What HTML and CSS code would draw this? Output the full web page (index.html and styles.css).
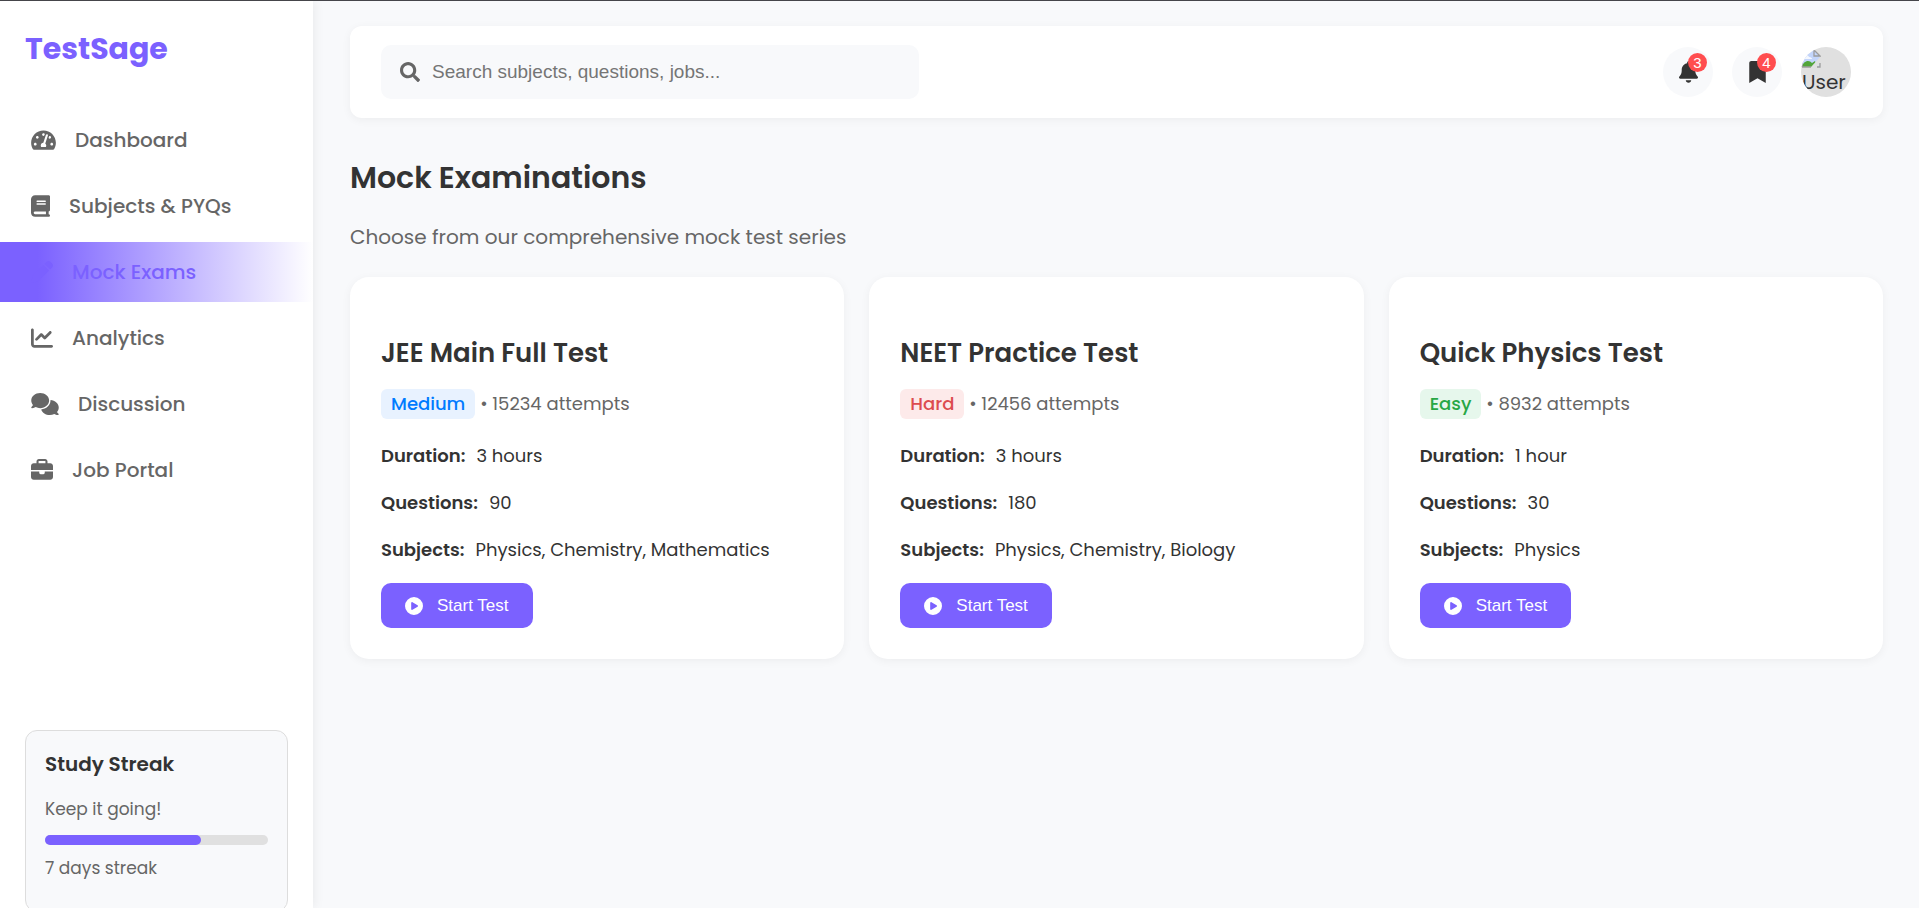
FILE: index.html
```html
<!DOCTYPE html>
<html lang="en">
<head>
<meta charset="utf-8">
<title>TestSage</title>
<link rel="stylesheet" href="styles.css">
</head>
<body>
<svg class="sprite" aria-hidden="true">
  <symbol id="play" viewBox="0 0 512 512"><path fill-rule="evenodd" d="M256 0a256 256 0 1 0 0 512 256 256 0 1 0 0-512zM188 147c8-5 17-5 25-1l144 88c7 5 12 13 12 22s-5 17-12 22l-144 88c-8 4-17 4-25 0s-12-12-12-21V168c0-9 5-17 12-21z"/></symbol>
</svg>
<div class="page">
  <aside class="sidebar">
    <div class="logo">TestSage</div>
    <nav class="nav">
      <a class="nav-link" href="#"><svg class="icon icon-wide" viewBox="0 0 576 512"><path d="M288 32C128.94 32 0 160.94 0 320c0 52.8 14.25 102.26 39.06 144.8 5.61 9.62 16.3 15.2 27.44 15.2h443c11.14 0 21.83-5.58 27.44-15.2C561.75 422.26 576 372.8 576 320c0-159.06-128.94-288-288-288zm0 64c14.71 0 26.58 10.13 30.32 23.65-1.11 2.26-2.64 4.23-3.45 6.67l-9.22 27.67c-5.13 3.49-10.97 6.01-17.64 6.01-17.67 0-32-14.33-32-32S270.33 96 288 96zM96 384c-17.67 0-32-14.33-32-32s14.33-32 32-32 32 14.33 32 32-14.33 32-32 32zm48-160c-17.67 0-32-14.33-32-32s14.33-32 32-32 32 14.33 32 32-14.33 32-32 32zm246.77-72.41l-61.33 184C343.13 347.33 352 364.54 352 384c0 11.72-3.38 22.55-8.88 32H232.88c-5.5-9.45-8.88-20.28-8.88-32 0-33.94 26.5-61.43 59.9-63.59l61.34-184.01c4.17-12.56 17.73-19.45 30.36-15.17 12.57 4.19 19.35 17.79 15.17 30.36zm14.66 57.2l15.52-46.55c3.47-1.29 7.13-2.23 11.05-2.23 17.67 0 32 14.33 32 32s-14.33 32-32 32c-11.38-.01-20.89-6.28-26.57-15.22zM480 384c-17.67 0-32-14.33-32-32s14.33-32 32-32 32 14.33 32 32-14.33 32-32 32z"/></svg>Dashboard</a>
      <a class="nav-link" href="#"><svg class="icon icon-narrow" viewBox="0 0 448 512"><path d="M96 0C43 0 0 43 0 96V416c0 53 43 96 96 96H384h32c17.7 0 32-14.3 32-32s-14.3-32-32-32V384c17.7 0 32-14.3 32-32V32c0-17.7-14.3-32-32-32H384 96zm0 384H352v64H96c-17.7 0-32-14.3-32-32s14.3-32 32-32zm32-240c0-8.8 7.2-16 16-16H336c8.8 0 16 7.2 16 16s-7.2 16-16 16H144c-8.8 0-16-7.2-16-16zm16 48H336c8.8 0 16 7.2 16 16s-7.2 16-16 16H144c-8.8 0-16-7.2-16-16s7.2-16 16-16z"/></svg>Subjects &amp; PYQs</a>
      <a class="nav-link active" href="#" aria-current="page"><svg class="icon" viewBox="0 0 512 512"><path d="M362.7 19.3L314.3 67.7 444.3 197.7l48.4-48.4c25-25 25-65.5 0-90.5L453.3 19.3c-25-25-65.5-25-90.5 0zM291.7 90.3L58.6 323.5c-10.4 10.4-18 23.3-22.2 37.4L1 481.2c-2.5 8.5-.2 17.6 6 23.8s15.300 8.500 23.700 6.100L151 475.700c14.100-4.200 27-11.800 37.400-22.200L421.700 220.300z"/></svg>Mock Exams</a>
      <a class="nav-link" href="#"><svg class="icon" viewBox="0 0 512 512"><path d="M64 64c0-17.7-14.3-32-32-32S0 46.3 0 64V400c0 44.2 35.8 80 80 80H480c17.7 0 32-14.3 32-32s-14.3-32-32-32H80c-8.8 0-16-7.2-16-16V64zm406.6 86.6c12.5-12.5 12.5-32.8 0-45.3s-32.8-12.500-45.300 0L320 210.700l-57.400-57.400c-12.500-12.500-32.800-12.500-45.300 0l-112 112c-12.500 12.500-12.500 32.800 0 45.300s32.800 12.500 45.300 0L240 221.300l57.400 57.400c12.500 12.500 32.800 12.500 45.300 0l128-128z"/></svg>Analytics</a>
      <a class="nav-link" href="#"><svg class="icon icon-widest" viewBox="0 0 640 512"><path d="M208 352c114.900 0 208-78.800 208-176S322.900 0 208 0S0 78.800 0 176c0 38.600 14.700 74.300 39.600 103.400c-3.500 9.400-8.700 17.700-14.200 24.700c-4.800 6.200-9.700 11-13.300 14.300c-1.800 1.600-3.300 2.900-4.300 3.700l-1.300 1C1 327.200-1.400 334.400 .8 340.900S9.100 352 16 352c21.800 0 43.800-5.600 62.100-12.500c9.200-3.500 17.800-7.400 25.200-11.400C134.100 343.300 169.800 352 208 352zM448 176c0 112.300-99.100 196.900-216.500 207C255.800 457.400 336.400 512 432 512c38.200 0 73.900-8.700 104.700-23.900c7.500 4 16 7.900 25.200 11.400c18.300 6.900 40.300 12.500 62.100 12.500c6.900 0 13.100-4.500 15.200-11.100c2.100-6.600-.2-13.800-5.800-17.900l-1.300-1c-1-.8-2.500-2-4.300-3.700c-3.600-3.300-8.500-8.100-13.300-14.300c-5.500-7-10.700-15.400-14.200-24.700c24.900-29 39.600-64.700 39.600-103.400c0-92.800-84.900-168.900-192.600-175.500c.4 5.100 .6 10.300 .6 15.500z"/></svg>Discussion</a>
      <a class="nav-link" href="#"><svg class="icon" viewBox="0 0 512 512"><path d="M184 48H328c4.400 0 8 3.600 8 8V96H176V56c0-4.400 3.600-8 8-8zm-56 8V96H64C28.700 96 0 124.700 0 160v96H192 320 512V160c0-35.300-28.700-64-64-64H384V56c0-30.900-25.100-56-56-56H184c-30.900 0-56 25.100-56 56zM512 288H320v32c0 17.700-14.300 32-32 32H224c-17.700 0-32-14.300-32-32V288H0V416c0 35.300 28.700 64 64 64H448c35.300 0 64-28.700 64-64V288z"/></svg>Job Portal</a>
    </nav>
    <section class="streak">
      <h3 class="streak-title">Study Streak</h3>
      <p class="streak-text">Keep it going!</p>
      <div class="bar"><div class="bar-fill" style="width: 70%"></div></div>
      <p class="streak-text">7 days streak</p>
    </section>
  </aside>
  <main class="main">
    <header class="header">
      <label class="search">
        <svg class="search-icon" viewBox="0 0 512 512"><path d="M505 442.700L405.300 343c-4.500-4.500-10.600-7-17-7H372c27.600-35.300 44-79.700 44-128C416 93.100 322.900 0 208 0S0 93.100 0 208s93.100 208 208 208c48.300 0 92.700-16.400 128-44v16.300c0 6.400 2.500 12.500 7 17l99.700 99.700c9.400 9.400 24.600 9.400 33.900 0l28.300-28.300c9.400-9.400 9.400-24.600.1-34zM208 336c-70.700 0-128-57.200-128-128 0-70.700 57.200-128 128-128 70.700 0 128 57.200 128 128 0 70.700-57.200 128-128 128z"/></svg>
        <input class="search-input" type="text" aria-label="Search" placeholder="Search subjects, questions, jobs...">
      </label>
      <div class="actions">
        <button class="round" type="button" aria-label="Notifications"><svg class="icon icon-narrow" viewBox="0 0 448 512"><path d="M224 0c-17.700 0-32 14.300-32 32V51.200C119 66 64 130.600 64 208v18.800c0 47-17.300 92.400-48.500 127.600l-7.400 8.300c-8.400 9.400-10.400 22.900-5.300 34.400S19.400 416 32 416H416c12.600 0 24-7.400 29.200-18.900s3.100-25-5.300-34.400l-7.400-8.300C401.300 319.200 384 273.900 384 226.800V208c0-77.400-55-142-128-156.800V32c0-17.700-14.300-32-32-32zm45.300 493.300c12-12 18.700-28.300 18.700-45.300H224 160c0 17 6.700 33.300 18.700 45.300s28.300 18.700 45.300 18.700s33.300-6.700 45.300-18.700z"/></svg><span class="badge">3</span></button>
        <button class="round" type="button" aria-label="Bookmarks"><svg class="icon icon-slim" viewBox="0 0 384 512"><path d="M0 512V48C0 21.490 21.490 0 48 0h288c26.510 0 48 21.490 48 48v464L192 400 0 512z"/></svg><span class="badge">4</span></button>
        <div class="avatar">
          <svg class="broken" viewBox="0 0 20 20"><path d="M1 1h12l6 6v11H1z" fill="#c3d5fb"/><path d="M3 9c0-3 4-4 5-1 2 0 3 1 3 2H3z" fill="#f4f8ff"/><path d="M1 18c1-6 7-8 10-4l3-2 2 6z" fill="#52a53a"/><path d="M10 18 19 8v7l-3 4z" fill="#e0e0e0"/><path d="M1 18V1h12M1 18h9M16 18h3v-4M13 1v6h6z" fill="none" stroke="#9c9c9c" stroke-width="1.300"/></svg>
          <span>User</span>
        </div>
      </div>
    </header>
    <h1 class="title">Mock Examinations</h1>
    <p class="subtitle">Choose from our comprehensive mock test series</p>
    <div class="cards">
      <article class="card">
        <h2 class="card-title">JEE Main Full Test</h2>
        <p class="meta"><span class="level medium">Medium</span> • 15234 attempts</p>
        <p class="fact"><strong>Duration:</strong>3 hours</p>
        <p class="fact"><strong>Questions:</strong>90</p>
        <p class="fact"><strong>Subjects:</strong>Physics, Chemistry, Mathematics</p>
        <button class="start" type="button"><svg class="play"><use href="#play"/></svg>Start Test</button>
      </article>
      <article class="card">
        <h2 class="card-title">NEET Practice Test</h2>
        <p class="meta"><span class="level hard">Hard</span> • 12456 attempts</p>
        <p class="fact"><strong>Duration:</strong>3 hours</p>
        <p class="fact"><strong>Questions:</strong>180</p>
        <p class="fact"><strong>Subjects:</strong>Physics, Chemistry, Biology</p>
        <button class="start" type="button"><svg class="play"><use href="#play"/></svg>Start Test</button>
      </article>
      <article class="card">
        <h2 class="card-title">Quick Physics Test</h2>
        <p class="meta"><span class="level easy">Easy</span> • 8932 attempts</p>
        <p class="fact"><strong>Duration:</strong>1 hour</p>
        <p class="fact"><strong>Questions:</strong>30</p>
        <p class="fact"><strong>Subjects:</strong>Physics</p>
        <button class="start" type="button"><svg class="play"><use href="#play"/></svg>Start Test</button>
      </article>
    </div>
  </main>
</div>
</body>
</html>
```

FILE: styles.css
```css
* { box-sizing: border-box; margin: 0; padding: 0; }
body {
  font-family: Poppins, Inter, sans-serif;
  font-size: 19px;
  color: #333;
  background: #f8f9fb;
}
.sprite { display: none; }
.page {
  display: flex;
  height: 100vh;
  overflow: hidden;
  border-top: 1px solid #45454a;
}
.sidebar {
  display: flex;
  flex-direction: column;
  flex: none;
  width: 313px;
  background: #fff;
  box-shadow: 2px 0 10px rgba(0, 0, 0, 0.06);
}
.logo {
  padding: 25px 25px 38px;
  font-size: 30px;
  line-height: 46px;
  font-weight: 700;
  color: #7b61ff;
}
.nav { display: flex; flex-direction: column; gap: 6px; }
.nav-link {
  display: flex;
  align-items: center;
  gap: 19px;
  height: 60px;
  padding: 0 31px;
  font-size: 20px;
  font-weight: 500;
  color: #666;
  text-decoration: none;
}
.nav-link.active {
  color: #7b61ff;
  background: linear-gradient(90deg, #7b61ff 12%, #fff);
}
.icon { width: 22px; height: 22px; fill: currentColor; flex: none; }
.icon-slim { width: 17px; }
.icon-narrow { width: 19px; }
.icon-wide { width: 25px; }
.icon-widest { width: 28px; }
.streak {
  margin: auto 25px -4px;
  padding: 18px 19px 29px;
  border: 1px solid #ddd;
  border-radius: 12px;
  background: #f8f9fb;
}
.streak-title { font-size: 20px; line-height: 30px; font-weight: 600; margin-bottom: 16px; }
.streak-text { font-size: 17px; line-height: 28px; color: #666; }
.bar { height: 10px; margin: 12px 0 9px; border-radius: 5px; background: #e0e0e0; }
.bar-fill { height: 100%; border-radius: 5px; background: #7b61ff; }
.main { flex: 1; padding: 25px 36px 37px 37px; }
.header {
  display: flex;
  align-items: center;
  justify-content: space-between;
  padding: 19px 32px 19px 31px;
  margin-bottom: 37px;
  border-radius: 12px;
  background: #fff;
  box-shadow: 0 2px 10px rgba(0, 0, 0, 0.05);
}
.search {
  display: flex;
  align-items: center;
  gap: 12px;
  width: 36%;
  min-width: 538px;
  height: 54px;
  padding: 0 19px;
  border-radius: 10px;
  background: #f8f9fb;
}
.search-icon { width: 20px; height: 20px; fill: #666; }
.search-input {
  flex: 1;
  border: 0;
  outline: 0;
  background: none;
  font: 19px "Liberation Sans", Arial, sans-serif;
  color: #333;
}
.search-input::placeholder { color: #757575; }
.actions { display: flex; gap: 19px; }
.round {
  position: relative;
  display: grid;
  place-items: center;
  width: 50px;
  height: 50px;
  border: 0;
  border-radius: 50%;
  background: #f8f9fb;
  color: #333;
}
.badge {
  position: absolute;
  top: 6px;
  right: 6px;
  width: 19px;
  height: 19px;
  border-radius: 50%;
  background: #ff4d4f;
  color: #fff;
  font: 15px/19px "Liberation Sans", Arial, sans-serif;
  text-align: center;
}
.avatar {
  width: 50px;
  height: 50px;
  overflow: hidden;
  border-radius: 50%;
  background: #e0e0e0;
  font-size: 20px;
  line-height: 26px;
}
.avatar span { display: block; padding-left: 1px; }
.broken { display: block; width: 20px; height: 20px; margin-top: 2px; }
.title { font-size: 30px; line-height: 46px; font-weight: 600; margin-bottom: 21px; }
.subtitle { font-size: 20px; line-height: 30px; color: #666; margin-bottom: 25px; }
.cards { display: grid; grid-template-columns: repeat(3, 1fr); gap: 25px; }
.card {
  padding: 57px 31px 31px;
  border-radius: 19px;
  background: #fff;
  box-shadow: 0 2px 10px rgba(0, 0, 0, 0.05);
}
.card-title { font-size: 26px; line-height: 38px; font-weight: 600; margin-bottom: 17px; }
.meta { font-size: 18px; line-height: 30px; color: #666; margin-bottom: 23px; }
.level {
  display: inline-block;
  padding: 0 10px;
  border-radius: 6px;
  font-weight: 500;
}
.medium { color: #007bff; background: #e8f2ff; }
.hard { color: #dc4c4f; background: #fdeaea; }
.easy { color: #28a745; background: #e6f7ec; }
.fact { font-size: 18px; line-height: 28px; margin-bottom: 19px; }
.fact strong { font-weight: 600; margin-right: 11px; }
.start {
  display: flex;
  align-items: center;
  gap: 14px;
  height: 45px;
  padding: 0 24px;
  border: 0;
  border-radius: 10px;
  background: #7b61ff;
  color: #fff;
  font: 17px "Liberation Sans", Arial, sans-serif;
}
.play { width: 18px; height: 18px; fill: currentColor; }
```
